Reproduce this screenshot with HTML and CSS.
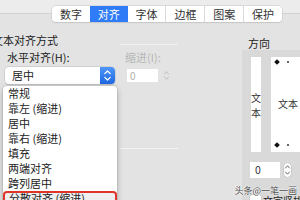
FILE: index.html
```html
<!DOCTYPE html>
<html lang="zh">
<head>
<meta charset="utf-8">
<link rel="stylesheet" href="styles.css">
</head>
<body>
<div class="tabs">
  <div class="tab">数字</div>
  <div class="tab active">对齐</div>
  <div class="tab">字体</div>
  <div class="tab">边框</div>
  <div class="tab">图案</div>
  <div class="tab">保护</div>
</div>
<div class="panel">
  <div class="left">
    <div class="title-row"><span class="title">文本对齐方式</span><span class="rule"></span></div>
    <div class="fields">
      <div class="field">
        <div class="label">水平对齐(H):</div>
        <div class="select">
          <span class="select-value">居中</span>
          <span class="select-btn">
            <svg width="15" height="17" viewBox="0 0 15 17"><path d="M4.8 6.6 L7.5 4 L10.2 6.6 M4.8 10.4 L7.5 13 L10.2 10.4" fill="none" stroke="#fff" stroke-width="1.3" stroke-linecap="round" stroke-linejoin="round"/></svg>
          </span>
        </div>
      </div>
      <div class="field">
        <div class="label disabled">缩进(I):</div>
        <div class="num-row">
          <div class="num small disabled">0</div>
          <svg class="stepper small-step" width="7" height="13" viewBox="0 0 7 13"><path d="M1.5 5 L3.5 2.6 L5.5 5 M1.5 8 L3.5 10.4 L5.5 8" fill="none" stroke="#bdbdbd" stroke-width="1" stroke-linecap="round" stroke-linejoin="round"/></svg>
        </div>
      </div>
    </div>
    <div class="group-line"></div>
  </div>
  <div class="right">
    <div class="dir-label">方向</div>
    <div class="dir-box">
      <div class="dials">
        <div class="vbox"><span>文</span><span>本</span></div>
        <div class="hbox">
          <div class="dots"><span class="diamond"></span><span class="dot"></span></div>
          <div class="htext">文本</div>
          <div class="dots"><span class="diamond"></span><span class="dot"></span></div>
        </div>
      </div>
      <div class="num-row deg">
        <div class="num big">0</div>
        <svg class="stepper" width="9" height="16" viewBox="0 0 9 16"><rect x="0.5" y="0.5" width="8" height="15" rx="4" fill="#fff" stroke="#c9c9c9"/><path d="M2.5 6 L4.5 3.8 L6.5 6 M2.5 10 L4.5 12.2 L6.5 10" fill="none" stroke="#666" stroke-width="1" stroke-linecap="round" stroke-linejoin="round"/></svg>
      </div>
      <div class="check-row"><span class="checkbox"></span><span class="check-text">文字竖排</span></div>
    </div>
  </div>
</div>
<div class="menu">
  <div class="item">常规</div>
  <div class="item">靠左 (缩进)</div>
  <div class="item">居中</div>
  <div class="item">靠右 (缩进)</div>
  <div class="item">填充</div>
  <div class="item">两端对齐</div>
  <div class="item">跨列居中</div>
  <div class="item marked">分散对齐 (缩进)</div>
</div>
<div class="watermark">头条@一笔一画</div>
</body>
</html>
```

FILE: styles.css
```css
* { box-sizing: border-box; }
html, body { margin: 0; padding: 0; }
body {
  width: 300px;
  height: 200px;
  overflow: hidden;
  position: relative;
  background: #ececec;
  font-family: "Noto Sans CJK SC", "Noto Sans", sans-serif;
  font-size: 11px;
  color: #222;
}
.tabs {
  position: relative;
  z-index: 2;
  display: flex;
  width: 230px;
  height: 16px;
  margin: 6px 0 0 52px;
  background: #fff;
  border-radius: 4px;
  box-shadow: 0 0 0 0.5px #c6c6c6, 0 1px 1px rgba(0,0,0,0.12);
  overflow: hidden;
}
.tab {
  flex: 1;
  display: flex;
  align-items: center;
  justify-content: center;
  font-size: 11px;
  line-height: 16px;
  color: #333;
  border-left: 1px solid #dadada;
}
.tab:first-child { border-left: none; }
.tab.active {
  background: #2f7cf6;
  color: #fff;
  border-left: none;
}
.tab.active + .tab { border-left: none; }
.panel {
  display: flex;
  height: 188px;
  margin-top: -9px;
  padding-top: 19px;
  background: #e3e3e3;
  border-top: 1px solid #d2d2d2;
}
.left {
  width: 242px;
  flex-shrink: 0;
  padding-left: 5px;
}
.title-row {
  display: flex;
  line-height: 14px;
  height: 14px;
}
.title {
  margin-left: -13px;
  white-space: nowrap;
}
.rule {
  align-self: flex-end;
  width: 58px;
  height: 1px;
  margin: 0 0 2px 62px;
  background: #efefef;
}
.fields {
  display: grid;
  grid-template-columns: 110px auto;
  column-gap: 10px;
  margin-top: 3px;
}
.label {
  line-height: 14px;
  padding-left: 2px;
  white-space: nowrap;
}
.label.disabled { color: #b7b7b7; padding-left: 0; }
.select {
  display: flex;
  height: 17px;
  margin-top: 3px;
  background: #fff;
  border-radius: 4px;
  box-shadow: 0 0 0 0.5px #bdbdbd, 0 1px 1px rgba(0,0,0,0.15);
  overflow: hidden;
}
.select-value {
  flex: 1;
  padding-left: 7px;
  line-height: 17px;
}
.select-btn {
  width: 15px;
  height: 17px;
  background: linear-gradient(#4f95f8, #1e68e3);
  display: flex;
}
.num-row {
  display: flex;
  align-items: flex-start;
  margin-top: 5px;
}
.num {
  background: #fff;
  color: #333;
  padding-left: 3px;
}
.num.small {
  width: 31px;
  height: 13px;
  margin-left: 2px;
  line-height: 13px;
  font-size: 10px;
}
.num.disabled { color: #b0b0b0; }
.stepper { flex-shrink: 0; display: block; }
.small-step { margin-left: 5px; }
.group-line {
  width: 58px;
  height: 1px;
  margin: 64px 0 0 115px;
  background: #f3f3f3;
}
.right {
  flex: 1;
  min-width: 0;
  display: flex;
  flex-direction: column;
}
.dir-label {
  margin: 3px 0 0 6px;
  line-height: 14px;
  white-space: nowrap;
}
.dir-box {
  flex: 1;
  background: #d9d9d9;
  padding: 7px 0 0 8px;
}
.dials {
  display: flex;
  gap: 10px;
}
.vbox {
  width: 19px;
  height: 95px;
  margin-left: 1px;
  background: #fff;
  display: flex;
  flex-direction: column;
  align-items: center;
  justify-content: center;
  font-size: 10px;
  line-height: 15px;
  color: #333;
}
.hbox {
  flex-shrink: 0;
  width: 30px;
  height: 95px;
  background: #fff;
  display: flex;
  flex-direction: column;
  justify-content: space-between;
  padding: 3px 0 5px 4px;
}
.dots {
  display: flex;
  align-items: center;
  gap: 8px;
  height: 4px;
}
.diamond {
  width: 4px;
  height: 4px;
  background: #111;
  transform: rotate(45deg);
}
.dot {
  width: 2px;
  height: 2px;
  border-radius: 50%;
  background: #333;
}
.htext {
  font-size: 10px;
  line-height: 12px;
  padding-left: 3px;
  white-space: nowrap;
  color: #333;
}
.deg { margin-top: 10px; gap: 3px; }
.num.big {
  width: 30px;
  height: 16px;
  line-height: 16px;
  font-size: 10.5px;
  padding-left: 5px;
}
.check-row {
  display: flex;
  align-items: center;
  gap: 2px;
  margin-top: 15px;
  font-size: 10px;
  white-space: nowrap;
}
.checkbox {
  width: 11px;
  height: 11px;
  background: #fff;
  border-radius: 2px;
  box-shadow: 0 0 0 0.5px #bbb;
  flex-shrink: 0;
}
.menu {
  position: absolute;
  left: 3px;
  top: 86px;
  width: 114px;
  background: #fff;
  border-radius: 4px;
  box-shadow: 0 2px 6px rgba(0,0,0,0.25), 0 0 0 0.5px rgba(0,0,0,0.12);
  z-index: 3;
}
.item {
  height: 15px;
  line-height: 15px;
  padding-left: 5px;
  white-space: nowrap;
}
.item.marked {
  background: #efefef;
  border-radius: 4px;
  box-shadow: inset 0 0 0 2px #e0352b;
  padding-left: 6px;
}
.watermark {
  position: absolute;
  right: 3px;
  top: 185px;
  font-size: 9px;
  line-height: 12px;
  color: #4a4a4a;
  text-shadow: 0 0 1px #fff, 0 0 1px #fff, 0 0 2px #fff;
  white-space: nowrap;
  z-index: 4;
}
```
